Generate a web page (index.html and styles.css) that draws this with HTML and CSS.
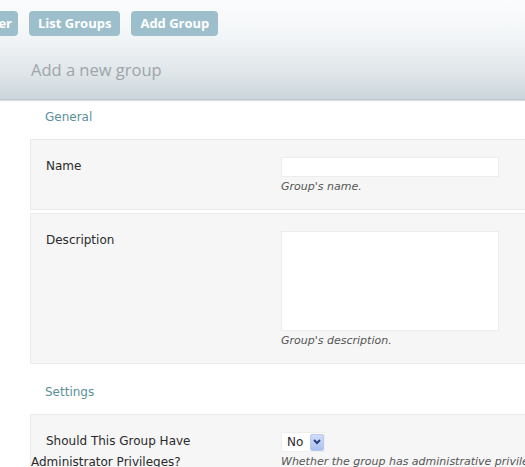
FILE: index.html
```html
<!DOCTYPE html>
<html>
<head>
<meta charset="utf-8">
<link rel="stylesheet" href="styles.css">
</head>
<body>
<div class="header">
  <div class="nav">
    <a class="btn btn-first">Add User</a>
    <a class="btn">List Groups</a>
    <a class="btn">Add Group</a>
  </div>
  <h1 class="title">Add a new group</h1>
</div>
<div class="main">
  <div class="fieldset">
    <div class="legend">General</div>
    <div class="row">
      <div class="label"><span class="label-text">Name</span></div>
      <div class="field">
        <input class="input" type="text">
        <div class="help">Group's name.</div>
      </div>
    </div>
    <div class="row">
      <div class="label"><span class="label-text">Description</span></div>
      <div class="field">
        <textarea class="textarea"></textarea>
        <div class="help">Group's description.</div>
      </div>
    </div>
  </div>
  <div class="fieldset fieldset-next">
    <div class="legend">Settings</div>
    <div class="row">
      <div class="label"><span class="label-text">Should This Group Have Administrator Privileges?</span></div>
      <div class="field">
        <span class="select"><select class="select-box"><option>No</option><option>Yes</option></select><span class="arrow"><svg width="8" height="6" viewBox="0 0 8 6"><path d="M1 1 L4 4 L7 1" fill="none" stroke="#2b3f78" stroke-width="2"/></svg></span></span>
        <div class="help">Whether the group has administrative privileges.</div>
      </div>
    </div>
  </div>
</div>
</body>
</html>
```
FILE: styles.css
```css
html, body {
  margin: 0;
  padding: 0;
  background: #fff;
  overflow: hidden;
}
body {
  width: 525px;
  font-family: "DejaVu Sans", Verdana, sans-serif;
  font-size: 12px;
  color: #2a2a2a;
}
.header {
  height: 100px;
  box-sizing: border-box;
  padding: 11px 0 0 30px;
  background: linear-gradient(#fbfcfd 0%, #f3f6f8 35%, #dfe5e9 75%, #cbd5db 100%);
  border-bottom: 1px solid #c2c6ca;
  box-shadow: 0 1px 1px #dcdfe2;
}
.nav {
  display: flex;
  gap: 11px;
}
.btn {
  display: block;
  height: 25px;
  line-height: 25px;
  padding: 0 9px;
  border-radius: 4px;
  background: #9dbfcc;
  color: #fff;
  font-family: "Open Sans", sans-serif;
  font-weight: bold;
  font-size: 13px;
  white-space: nowrap;
}
.btn-first {
  box-sizing: border-box;
  width: 80px;
  flex: none;
  margin-left: -92px;
  text-align: right;
  padding-right: 6px;
}
.title {
  margin: 22px 0 0 1px;
  font-family: "Open Sans", sans-serif;
  font-weight: normal;
  font-size: 16.5px;
  line-height: 23px;
  color: #9ea5aa;
}
.main {
  padding: 2px 0 0 30px;
}
.legend {
  padding: 8px 0 0 15px;
  height: 29px;
  line-height: 15px;
  color: #5a8f9b;
  font-size: 12px;
}
.fieldset-next .legend {
  padding-top: 18px;
  height: 29px;
}
.row {
  display: flex;
  background: #f6f6f6;
  border: 1px solid #eaeaea;
  border-right: none;
  margin-bottom: 3px;
}
.label {
  width: 250px;
  box-sizing: border-box;
  padding: 16px 15px 0 0;
  flex: none;
  line-height: 21px;
}
.label-text {
  padding-left: 15px;
}
.field {
  padding: 17px 0 15px 0;
  white-space: nowrap;
}
.input {
  display: block;
  box-sizing: border-box;
  width: 218px;
  height: 20px;
  margin: 0;
  border: 1px solid #ececec;
  background: #fff;
}
.textarea {
  display: block;
  box-sizing: border-box;
  width: 218px;
  height: 100px;
  margin: 0;
  border: 1px solid #ececec;
  background: #fff;
  resize: none;
}
.help {
  margin-top: 3px;
  line-height: 14px;
  font-size: 11px;
  font-style: italic;
  color: #555;
}
.select {
  display: inline-flex;
  align-items: center;
  box-sizing: border-box;
  height: 20px;
  width: 44px;
  background: #fff;
  border: 1px solid #eeeeee;
  vertical-align: top;
}
.select-box {
  appearance: none;
  -webkit-appearance: none;
  border: none;
  background: transparent;
  font-family: "DejaVu Sans", sans-serif;
  font-size: 12px;
  color: #2a2a2a;
  width: 28px;
  padding: 0 0 0 5px;
  margin: 0;
  outline: none;
}
.arrow {
  display: flex;
  align-items: center;
  justify-content: center;
  box-sizing: border-box;
  width: 14px;
  height: 17px;
  border: 1px solid #b7caf1;
  border-radius: 2px;
  background: linear-gradient(#d0ddf8, #aac1ef);
}
```
